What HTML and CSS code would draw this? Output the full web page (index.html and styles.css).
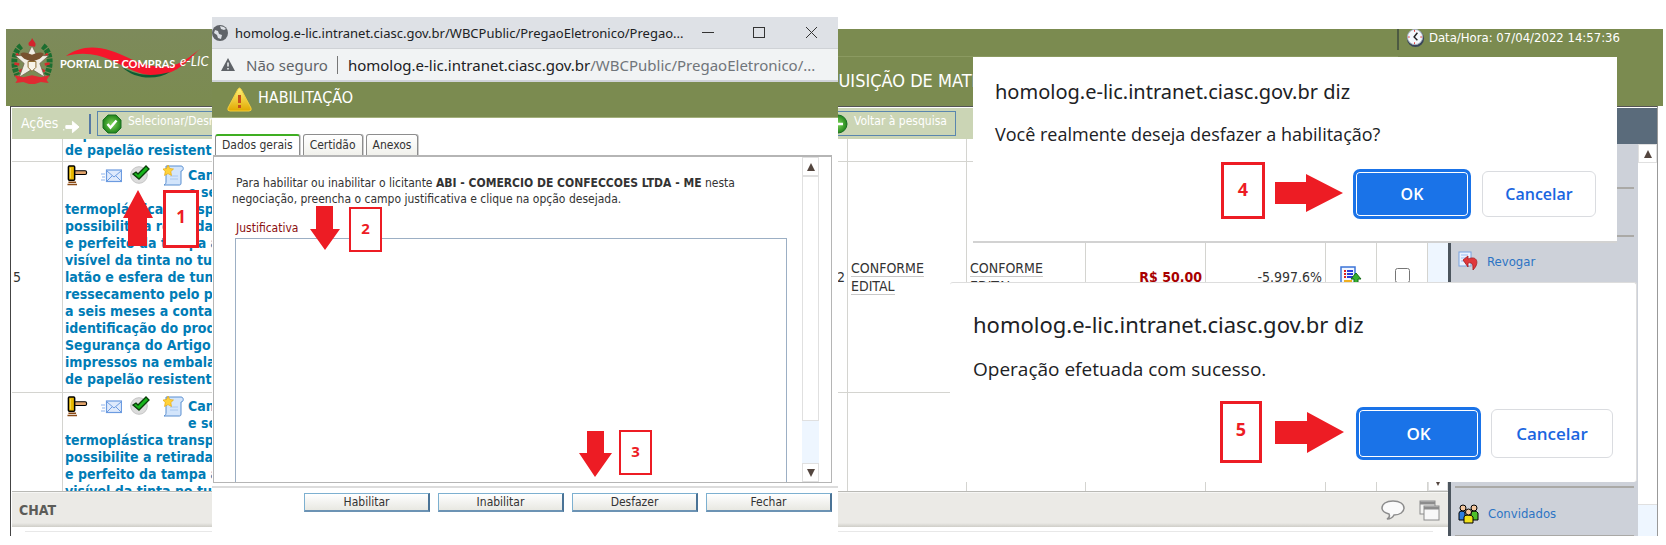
FILE: index.html
```html
<!DOCTYPE html>
<html lang="pt-BR">
<head>
<meta charset="utf-8">
<title>Portal de Compras e-LIC</title>
<link rel="stylesheet" href="styles.css">
</head>
<body>
<svg class="defs" aria-hidden="true">
  <defs>
    <linearGradient id="gold" x1="0" y1="0" x2="0" y2="1"><stop offset="0" stop-color="#fff27a"/><stop offset="1" stop-color="#e0a800"/></linearGradient>
    <radialGradient id="green"><stop offset="0" stop-color="#7fd65a"/><stop offset="1" stop-color="#23861c"/></radialGradient>
    <symbol id="gavel" viewBox="0 0 21 22"><rect x="7" y="6" width="13" height="4" rx="1.500" fill="#e2a46c" stroke="#000" stroke-width="1.200"/><rect x="1" y="1" width="6.500" height="15" rx="1" fill="#e8b800" stroke="#000" stroke-width="1.600"/><path d="M3 3v11" stroke="#ffe45a"/><path d="M1 18h8M0 20.500h10" stroke="#8a4a14" stroke-width="1.500"/></symbol>
    <symbol id="mail" viewBox="0 0 21 14"><path d="M0 5h4M1 8h3M0 11h4" stroke="#8db4ee" stroke-width="1.200"/><rect x="5.500" y="1" width="15" height="11.500" fill="#dfeafc" stroke="#6c9be0" stroke-width="1.200"/><path d="M6 2l7 6 7-6M6 12l5-5M20 12l-5-5" fill="none" stroke="#6c9be0"/></symbol>
    <symbol id="check" viewBox="0 0 20 19"><circle cx="9" cy="10" r="8.300" fill="#dcdcdc" stroke="#c4c4c4"/><path d="M3 9l3-2 2 2 8-8 3 3-10 10z" fill="#17b51c" stroke="#0a3d0a" stroke-width="1.300"/></symbol>
    <symbol id="scroll" viewBox="0 0 21 21"><path d="M3 1h15c3 0 3 5 0 5v12c0 2-1 2-2 2H1c2-1 2-2 2-4z" fill="#d3e5fb" stroke="#5a8fd0"/><path d="M7 11h8M7 14h8" stroke="#a9c8ee"/><path d="M5 0l1.800 3.500 3.700.5-2.700 2.600.7 3.900L5 8.600 1.500 10.500l.7-3.900L0 4l3.500-.5z" fill="#ffd23a" stroke="#e6a100" stroke-width=".6"/></symbol>
  </defs>
</svg>

<div class="app">
  <header class="top">
    <div class="brand">
      <svg class="crest" viewBox="0 0 42 48" role="img" aria-label="Brasão de Santa Catarina">
        <path d="M10 8C2 14 1 27 6 38M32 8c8 6 9 19 4 30" fill="none" stroke="#1c6e30" stroke-width="6" stroke-dasharray="4 1"/>
        <path d="M5 16l4 4M3 26l5 1M37 16l-4 4M39 26l-5 1M8 34l4-2M34 34l-4-2" stroke="#d42b2b" stroke-width="2.500"/>
        <path d="M21 8l5 10h12l-9 8 5 14-13-8-13 8 5-14-9-8h12z" fill="#f1eee4" stroke="#6e6650" stroke-width=".8"/>
        <path d="M9 16c4-3 8 0 12 1 4-1 8-4 12-1-2 5-6 6-9 7l-3 3-3-3c-3-1-7-2-9-7z" fill="#77522f"/>
        <path d="M17 24h8v6l-4 4-4-4z" fill="#f8f4e8" stroke="#8a6a30"/>
        <path d="M18 8c-2-5 2-3 3-8 2 4 5 5 3 9z" fill="#d3242c"/>
        <path d="M3 38l9 2 9-2 9 2 9-2-3 5 2 3-8-1-6 2h-6l-6-2-8 1 2-3z" fill="#e02a32"/>
      </svg>
      <div class="logo">
        <svg class="swoosh" viewBox="0 0 140 32" aria-hidden="true">
          <path d="M0 10C18-3 38-1 67 14c18 8 34 8 44 4 10-4 15-9 23-15-7 6-12 13-20 18-12 9-30 11-46 4C50 17 30 2 0 10z" fill="#f5152b"/>
          <path d="M56 21c16 9 30 10 48 5-14 9-36 7-48-5z" fill="#0c5c33"/>
        </svg>
        <span class="logo-name">PORTAL DE COMPRAS</span>
        <span class="logo-sub">e-LIC</span>
      </div>
    </div>
    <h1 class="title">AQUISIÇÃO DE MATERIAL</h1>
    <div class="clock">
      <svg viewBox="0 0 20 20" width="19" height="19" aria-hidden="true"><circle cx="10" cy="11" r="9" fill="#39445a"/><circle cx="9.500" cy="9.500" r="8" fill="#f4f8fc" stroke="#a8b4c4"/><path d="M12 5L8.500 9.500 12 13" fill="none" stroke="#222" stroke-width="1.500"/><path d="M9 2v2M9 15v2M2 9.500h2M15 9.500h2" stroke="#d33"/></svg>
      <span>Data/Hora: 07/04/2022 14:57:36</span>
    </div>
  </header>

  <div class="body">
    <main class="main">
      <div class="toolbar">
        <span class="actions-label">Ações</span>
        <svg class="arrow" viewBox="0 0 18 14" aria-hidden="true"><path d="M3 5.500h7V1l7 6-7 6V8.500H3zM0 10h1.500" fill="#fff" stroke="#fff" stroke-width="1"/></svg>
        <span class="bar"></span>
        <button class="tool select">
          <svg viewBox="0 0 20 20" width="20" height="20" aria-hidden="true"><path d="M6 1h8l5 5v8l-5 5H6l-5-5V6z" fill="url(#green)" stroke="#1b6e24"/><path d="M5.500 10l3 3.500 6-7" fill="none" stroke="#fff" stroke-width="2.500"/></svg>
          <span>Selecionar/Desmarcar todos</span>
        </button>
        <button class="tool back">
          <svg viewBox="0 0 20 20" width="20" height="20" aria-hidden="true"><circle cx="10" cy="10" r="9" fill="url(#green)" stroke="#1b6e24"/><path d="M5 10h10M9 6l-4 4 4 4" fill="none" stroke="#fff" stroke-width="2.500"/></svg>
          <span>Voltar à pesquisa</span>
        </button>
      </div>

      <div class="list">
        <div class="viewport">
          <table class="items">
            <colgroup><col class="c-num"><col><col class="c-doc"><col class="c-doc"><col class="c-money"><col class="c-money"><col class="c-icon"><col class="c-icon"></colgroup>
            <tbody>
              <tr class="r-first">
                <td></td><td class="desc">impressos na embalagem<br>de papelão resistente</td><td></td><td></td><td></td><td></td><td></td><td></td>
              </tr>
              <tr class="r-item">
                <td class="num">5</td>
                <td class="desc"><div class="wrap"><div class="text">
                  <span class="icons"><svg width="21" height="21"><use href="#gavel"/></svg><svg class="i-mail" width="21" height="14"><use href="#mail"/></svg><svg width="20" height="19"><use href="#check"/></svg><svg class="i-scroll" width="21" height="21"><use href="#scroll"/></svg></span>Caneta<br>e semi<br>termoplástica transparente<br>possibilite a retirada<br>e perfeito da tampa ao<br>visível da tinta no tubo<br>latão e esfera de tungs<br>ressecamento pelo prazo<br>a seis meses a contar<br>identificação do produto<br>Segurança do Artigo<br>impressos na embalagem<br>de papelão resistente</div><span class="qty">2</span></div></td>
                <td class="doc"><a href="#">CONFORME</a><br><a href="#">EDITAL</a></td>
                <td class="doc"><a href="#">CONFORME</a><br><a href="#">EDITAL</a></td>
                <td class="money">R$ 50,00</td>
                <td class="pct">-5.997,6%</td>
                <td class="center"><svg width="22" height="22" viewBox="0 0 22 22" aria-hidden="true"><rect x="1" y="1" width="14" height="18" fill="#f3f7ff" stroke="#3b74d8" stroke-width="1.500"/><path d="M4 5h2M4 8h2M4 11h2" stroke="#e02020" stroke-width="2"/><path d="M7 5h6M7 8h6M7 11h6" stroke="#2a3ad8" stroke-width="2"/><path d="M4 15h8" stroke="#f0b020" stroke-width="2"/><path d="M16 7l5 6h-3v6h-4v-6h-3z" fill="#36b030" stroke="#146a18"/></svg></td>
                <td class="center"><input type="checkbox" aria-label="Selecionar item 5"></td>
              </tr>
              <tr class="r-item">
                <td></td>
                <td class="desc"><div class="text">
                  <span class="icons"><svg width="21" height="21"><use href="#gavel"/></svg><svg class="i-mail" width="21" height="14"><use href="#mail"/></svg><svg width="20" height="19"><use href="#check"/></svg><svg class="i-scroll" width="21" height="21"><use href="#scroll"/></svg></span>Caneta<br>e semi<br>termoplástica transparente<br>possibilite a retirada<br>e perfeito da tampa ao<br>visível da tinta no tubo</div></td>
                <td></td><td></td><td></td><td></td><td></td><td></td>
              </tr>
            </tbody>
          </table>
        </div>
        <div class="scroll"><span class="sc-btn"><i class="down"></i></span></div>
      </div>

      <div class="chat">
        <h2>CHAT</h2>
        <svg width="25" height="20" viewBox="0 0 25 20" aria-hidden="true"><path d="M12 1c7 0 11 3 11 7s-4 7-10 7c-1 2-4 4-7 4 2-1 3-3 2-5-4-1-7-3-7-6 0-4 4-7 11-7z" fill="#fafafa" stroke="#8c8c8c" stroke-width="1.500"/></svg>
        <svg width="21" height="21" viewBox="0 0 21 21" aria-hidden="true"><rect x="1" y="1" width="15" height="13" fill="#f4f4f2" stroke="#8c8c8c"/><path d="M1 3h15" stroke="#8c8c8c" stroke-width="3"/><rect x="5" y="6" width="15" height="14" fill="#f8f8f8" stroke="#8c8c8c"/><path d="M5 8h15" stroke="#8c8c8c" stroke-width="3"/></svg>
      </div>
      <div class="chat-log"></div>
    </main>

    <aside class="side">
      <div class="side-head"></div>
      <div class="side-body">
        <nav class="menu">
          <a href="#" class="m-blank" aria-label="Menu"></a>
          <a href="#" class="m-gap" aria-label="Menu"></a>
          <a href="#" class="m-item"><svg width="20" height="20" viewBox="0 0 20 20" aria-hidden="true"><rect x="1" y="1" width="12" height="14" fill="#eaf2ff" stroke="#7aa3e0"/><path d="M3 4h7M3 7h5M3 10h4" stroke="#9cbcf0"/><path d="M5 9l5-4v3c9-4 12 4 5 11 0-5 0-8-5-7v4z" fill="#e0383c" stroke="#a51a20" stroke-width=".8"/></svg><span>Revogar</span></a>
          <a href="#" class="m-hidden" aria-label="Menu"></a>
          <a href="#" class="m-item m-last"><svg width="21" height="20" viewBox="0 0 21 20" aria-hidden="true"><g stroke="#000" stroke-width="1"><path d="M1 16V9q0-2 3-2t3 2v7z" fill="#2f7fe0"/><circle cx="5" cy="4" r="3" fill="#f4c8a0"/><path d="M13 16V9q0-2 3-2t4 2v7z" fill="#4fc02a"/><circle cx="16" cy="4" r="3" fill="#f4c8a0"/><path d="M6 19v-6q0-2 4-2t5 2v6z" fill="#f2e21c"/><circle cx="10.500" cy="8" r="3" fill="#f4c8a0"/></g></svg><span>Convidados</span></a>
        </nav>
        <div class="scroll side-scroll"><span class="sc-btn"><i class="up"></i></span><span class="thumb"></span></div>
      </div>
    </aside>
  </div>
</div>

<section class="popup">
  <div class="p-title">
    <svg width="16" height="16" viewBox="0 0 16 16" aria-hidden="true"><circle cx="8" cy="8" r="8" fill="#5f6368"/><path d="M3 5l3 1 1 3 3 1-1 4-3-1-1-3-3-2zM8 1l1 3 3 1 2-1-2-2z" fill="#dee1e6"/></svg>
    <span class="p-name">homolog.e-lic.intranet.ciasc.gov.br/WBCPublic/PregaoEletronico/Pregao...</span>
    <svg width="116" height="14" viewBox="0 0 116 14" fill="none" stroke="#333" aria-hidden="true"><path d="M0 6.500h12M104 1l11 11M115 1l-11 11"/><rect x="51.500" y="1.500" width="11" height="10"/></svg>
  </div>
  <div class="p-addr">
    <svg width="14" height="13" viewBox="0 0 14 13" aria-hidden="true"><path d="M7 0l7 13H0z" fill="#5f6368"/><path d="M7 4.500v4M7 10v1.500" stroke="#f1f3f4" stroke-width="1.500"/></svg>
    <span class="unsafe">Não seguro</span><span class="pipe"></span>
    <span class="url">homolog.e-lic.intranet.ciasc.gov.br<span>/WBCPublic/PregaoEletronico/...</span></span>
  </div>
  <div class="p-head">
    <svg width="25" height="25" viewBox="0 0 25 25" aria-hidden="true"><path d="M12.500 1q1 0 2 2l9.500 18q1 3-2 3H3q-3 0-2-3L10.500 3q1-2 2-2z" fill="url(#gold)" stroke="#f3cf3c"/><path d="M12.500 8v8M12.500 18v3" stroke="#c8501a" stroke-width="3"/></svg>
    <h2>HABILITAÇÃO</h2>
  </div>
  <div class="tabs" role="tablist">
    <button class="tab active" role="tab">Dados gerais</button>
    <button class="tab" role="tab">Certidão</button>
    <button class="tab" role="tab">Anexos</button>
  </div>
  <div class="panel">
    <div class="panel-main">
      <p>Para habilitar ou inabilitar o licitante <b>ABI - COMERCIO DE CONFECCOES LTDA - ME</b> nesta negociação, preencha o campo justificativa e clique na opção desejada.</p>
      <label for="just">Justificativa</label>
      <textarea id="just"></textarea>
    </div>
    <div class="scroll p-scroll"><span class="sc-btn"><i class="up"></i></span><span class="thumb"></span><span class="track"></span><span class="sc-btn"><i class="down"></i></span></div>
  </div>
  <div class="p-actions">
    <button>Habilitar</button><button>Inabilitar</button><button>Desfazer</button><button>Fechar</button>
  </div>
</section>

<section class="dialog d-confirm" role="dialog">
  <h3>homolog.e-lic.intranet.ciasc.gov.br diz</h3>
  <p>Você realmente deseja desfazer a habilitação?</p>
  <div class="d-actions"><button class="ok">OK</button><button class="cancel">Cancelar</button></div>
</section>
<section class="dialog d-done" role="dialog">
  <h3>homolog.e-lic.intranet.ciasc.gov.br diz</h3>
  <p>Operação efetuada com sucesso.</p>
  <div class="d-actions"><button class="ok">OK</button><button class="cancel">Cancelar</button></div>
</section>

<svg class="ptr a1" viewBox="0 0 30 56" aria-hidden="true"><path d="M15 0l15 28h-6v28H5V28H0z"/></svg><span class="step s1">1</span>
<svg class="ptr a2" viewBox="0 0 30 44" aria-hidden="true"><path d="M6 0h17v23h7L15 44 0 23h6z"/></svg><span class="step s2">2</span>
<svg class="ptr a3" viewBox="0 0 33 46" aria-hidden="true"><path d="M8 0h17v22h8L16 46 0 22h8z"/></svg><span class="step s3">3</span>
<svg class="ptr a4" viewBox="0 0 68 38" aria-hidden="true"><path d="M0 8h31V0l37 19-37 19v-8H0z"/></svg><span class="step s4">4</span>
<svg class="ptr a5" viewBox="0 0 69 41" aria-hidden="true"><path d="M0 9h32V0l37 20-37 21v-9H0z"/></svg><span class="step s5">5</span>
</body>
</html>
```
FILE: styles.css
```css
* { box-sizing: border-box; }
html, body { height: 100%; }
body {
  margin: 0;
  padding: 29px 3px 9px 6px;
  position: relative;
  overflow: hidden;
  background: #fff;
  color: #333;
  font: 14px/17px "DejaVu Sans Condensed", "DejaVu Sans", Tahoma, sans-serif;
}
h1, h2, h3, p { margin: 0; font-weight: normal; }
button { font: inherit; margin: 0; padding: 0; }
a { text-decoration: none; color: inherit; }
svg { flex: none; }
.defs { position: absolute; width: 0; height: 0; }

.app { height: 100%; display: flex; flex-direction: column; }

.top {
  height: 77px;
  flex: none;
  display: flex;
  align-items: flex-start;
  background: linear-gradient(#8b9a61, #8b9a61) 832px 27px / 560px 1px no-repeat, #7b8b50;
}
.brand { width: 206px; flex: none; display: flex; align-items: flex-start; padding: 9px 0 0 5px; height: 77px; background: linear-gradient(#7d8a5b, #7b8b50); }
.crest { width: 42px; height: 47px; }
.logo { position: relative; display: flex; align-items: center; padding: 16px 0 0 7px; white-space: nowrap; color: #fff; }
.swoosh { position: absolute; left: 13px; top: 8px; width: 140px; height: 32px; }
.logo-name { position: relative; width: 120px; font: bold 11px/20px Lato, sans-serif; }
.logo-sub { position: relative; font: italic 13px/14px Lato, sans-serif; padding-bottom: 6px; }
.title { padding: 40px 0 0 603px; flex: 1; font-size: 18px; line-height: 24px; color: #fff; white-space: nowrap; }
.clock {
  display: flex;
  align-items: center;
  gap: 4px;
  height: 21px;
  margin-right: 43px;
  padding: 0 0 4px 7px;
  border-left: 2px solid #4d5a42;
  color: #fff;
  font-size: 13px;
  white-space: nowrap;
}

.body { flex: 1; min-height: 0; display: flex; margin: 0 5px 0 4px; border-left: 1px solid #444; border-right: 1px solid #999; border-top: 1px solid #555; padding: 1px 0 0 1px; }
.main { flex: 1; min-width: 0; display: flex; flex-direction: column; }
.toolbar { height: 31px; flex: none; display: flex; align-items: center; background: #cbd5b5; color: #fff; }
.actions-label { margin-left: 9px; width: 42px; }
.arrow { width: 17px; height: 14px; margin-top: 6px; }
.bar { width: 2px; height: 20px; margin: 0 6px 0 9px; background: #5679a4; }
.tool { display: flex; align-items: center; gap: 6px; height: 25px; padding: 0 8px 0 4px; border: 1px solid #5a86ae; background: transparent; color: #fff; font-size: 12px; white-space: nowrap; }
.tool span { padding-bottom: 4px; }
.select { width: 200px; }
.back { margin-left: 526px; }

.list { flex: 1; min-height: 0; display: flex; border-bottom: 1px solid #b9b9b5; }
.viewport { flex: 1; min-width: 0; overflow: hidden; }
.items { width: 100%; margin-top: -13px; table-layout: fixed; border-collapse: separate; border-spacing: 0; }
.c-num { width: 51px; }
.c-doc { width: 119px; }
.c-money { width: 120px; }
.c-icon { width: 51px; }
td { padding: 0 2px; border: solid #d4d4d0; border-width: 0 1px 1px 0; vertical-align: middle; }
td:first-child { padding-left: 1px; }
.r-first { height: 36px; }
.r-first .desc { vertical-align: top; line-height: 16px; }
.r-item { height: 231px; }
.r-item td.desc { vertical-align: top; padding-top: 5px; }
.desc { color: #007cb6; font-weight: bold; white-space: nowrap; }
.wrap { display: flex; justify-content: space-between; align-items: center; }
.qty { color: #333; font-weight: normal; }
.icons { float: left; width: 123px; height: 34px; display: flex; align-items: flex-start; padding-left: 2px; }
.icons svg { margin-top: -2px; }
.icons .i-mail { margin: 2px 8px 0 13px; }
.icons .i-scroll { margin-left: 13px; }
.doc { line-height: 18px; padding-left: 3px; }
.doc a { border-bottom: 1px solid #c8c8c8; }
.money { text-align: right; color: #a80000; font-weight: bold; padding-right: 3px; }
.pct { text-align: right; padding-right: 3px; }
.center { text-align: center; }
.center svg { display: block; margin: 0 auto; }
.center input { width: 15px; height: 15px; margin: 0; }

.scroll { width: 20px; flex: none; display: flex; flex-direction: column; background: #eef6ff; }
.list .scroll { justify-content: flex-end; }
.sc-btn { height: 19px; flex: none; display: flex; align-items: center; justify-content: center; background: #fff; border: 1px solid #e0e0e0; }
.thumb { flex: 1; background: #fff; border: 1px solid #e0e0e0; }
.up, .down { border: solid transparent; border-width: 0 4px; }
.up { border-bottom: 8px solid #54463f; }
.down { border-top: 8px solid #54463f; }

.chat { height: 35px; flex: none; display: flex; align-items: center; gap: 13px; padding: 0 8px 0 7px; background: linear-gradient(#ebeae6 88%, #cfcec8); border-top: 1px solid #f6f6f4; }
.chat h2 { flex: 1; font-weight: bold; font-size: 14px; color: #5c5c58; }
.chat-log { height: 9px; flex: none; margin: 0 15px 0 13px; background: linear-gradient(#e8e8e8, #e8e8e8) 0 4px / 100% 1px no-repeat; }

.side { width: 209px; flex: none; display: flex; flex-direction: column; border-left: 3px solid #4c555e; }
.side-head { height: 36px; flex: none; background: #5a6b7b; }
.side-body { flex: 1; min-height: 0; display: flex; }
.menu { flex: 1; display: flex; flex-direction: column; padding: 0 4px; background: #cdd1d9; }
.menu a { display: flex; align-items: center; gap: 9px; padding-left: 3px; border-bottom: 2px solid #aaa9a6; color: #2c74c4; font-size: 13px; }
.m-blank { height: 45px; }
.m-gap { height: 48px; }
.m-item { height: 50px; }
.menu .m-hidden { flex: 1; }
.menu .m-last { border-bottom-width: 1px; height: 48px; padding-top: 4px; }
.side-scroll { width: 19px; }
.side-scroll .thumb { border-width: 0 0 1px; margin-bottom: 31px; }

.popup { position: absolute; left: 212px; top: 17px; width: 626px; height: 520px; display: flex; flex-direction: column; background: #fff; }
.p-title { height: 32px; flex: none; display: flex; align-items: center; padding: 0 20px 0 0; gap: 7px; background: #dee1e6; border-bottom: 1px solid #cfd2d6; font: 13px/18px "Noto Sans", sans-serif; color: #202124; }
.p-name { flex: 1; white-space: nowrap; }
.p-addr { height: 33px; flex: none; display: flex; align-items: center; padding-left: 9px; background: #f1f3f4; border-bottom: 2px solid #d0d3d8; font: 15px/20px "Noto Sans", sans-serif; color: #202124; white-space: nowrap; }
.unsafe { margin-left: 11px; color: #5f6368; }
.pipe { width: 1px; height: 18px; margin: 0 10px 0 9px; background: #777; }
.url span { color: #70757a; }
.p-head { height: 36px; flex: none; display: flex; align-items: center; gap: 6px; padding-left: 15px; background: #7b8b50; border-bottom: 1px solid #a4b07c; color: #fff; }
.p-head h2 { font-size: 16px; line-height: 20px; padding-bottom: 4px; }
.tabs { display: flex; gap: 3px; padding: 16px 0 0 3px; }
.tab { height: 21px; padding: 0 6px; border: 1px solid #8d8d8d; border-bottom: 0; border-radius: 3px 3px 0 0; background: linear-gradient(#fff, #f1f1ec); font-size: 12px; color: #333; box-shadow: 1px 0 0 #ccc; }
.tab.active { border-top: 2px solid #3fae22; background: #fff; }
.panel { flex: 1; min-height: 0; display: flex; margin: 0 6px 0 1px; border: 1px solid #b5b5b5; border-top-width: 2px; }
.panel-main { flex: 1; display: flex; flex-direction: column; padding: 18px 15px 0 18px; font-size: 12px; line-height: 16px; }
.panel-main p { text-indent: 4px; }
.panel-main label { margin: 13px 0 2px 4px; color: #8b1010; }
.panel-main textarea { flex: 1; margin-left: 3px; padding: 4px; resize: none; border: 1px solid #9cafc4; border-bottom: 0; outline: 0; background: #fff; font: inherit; }
.p-scroll { width: 17px; margin-right: 12px; }
.p-scroll .track { height: 42px; }
.p-actions { height: 51px; flex: none; display: flex; justify-content: flex-end; gap: 8px; margin-top: 3px; padding: 5px 6px 0 0; border-top: 2px solid #dcdcdc; align-items: flex-start; }
.p-actions button { width: 126px; height: 19px; border: 1px solid #7db0d0; border-right: 2px solid #4a7396; border-bottom: 2px solid #6c93b4; background: linear-gradient(#fff, #e8e8e2); font-size: 12px; line-height: 16px; color: #333; }

.dialog { position: absolute; background: #fff; font-family: "Open Sans", "Segoe UI", sans-serif; color: #202124; white-space: nowrap; display: flex; flex-direction: column; }
.dialog h3 { font-family: "Noto Sans", sans-serif; }
.d-actions { display: flex; justify-content: flex-end; align-items: center; margin-top: auto; }
.dialog button { background: #fff; border: 1px solid #dadce0; border-radius: 6px; color: #1a66e0; font-weight: 600; }
.dialog .ok { background: #1a73e8; color: #fff; border: 3px solid #1a73e8; border-radius: 7px; box-shadow: inset 0 0 0 1px #fff; }
.d-confirm { left: 973px; top: 57px; width: 644px; height: 186px; padding: 21px 21px 22px 22px; border-bottom: 2px solid #d2d2d2; }
.d-confirm h3 { font-size: 20px; line-height: 28px; }
.d-confirm p { font-size: 18px; line-height: 24px; margin-top: 16px; }
.d-confirm .d-actions { gap: 11px; }
.d-confirm button { width: 114px; height: 46px; font-size: 16px; }
.d-confirm .ok { width: 118px; height: 50px; }
.d-done { left: 950px; top: 282px; width: 687px; height: 200px; padding: 26px 23px 22px 23px; border-top: 1px solid #ddd; border-right: 1px solid #ddd; border-radius: 3px; }
.d-done h3 { font-size: 22px; line-height: 30px; }
.d-done p { font-size: 19px; line-height: 26px; margin-top: 17px; }
.d-done .d-actions { gap: 10px; }
.d-done button { width: 122px; height: 49px; font-size: 17px; }
.d-done .ok { width: 125px; height: 53px; }

.ptr { position: absolute; fill: #ed1c24; }
.step { position: absolute; display: flex; align-items: center; justify-content: center; background: #fff; border: 3px solid #ed1c24; color: #ed1c24; font: bold 15px/18px "Open Sans", sans-serif; padding-bottom: 4px; }
.a1 { left: 123px; top: 190px; width: 30px; height: 56px; }
.s1 { left: 163px; top: 190px; width: 36px; height: 58px; font-size: 17px; }
.a2 { left: 310px; top: 206px; width: 30px; height: 44px; }
.s2 { left: 349px; top: 207px; width: 33px; height: 45px; border-width: 2px; }
.a3 { left: 579px; top: 431px; width: 33px; height: 46px; }
.s3 { left: 619px; top: 430px; width: 33px; height: 45px; border-width: 2px; }
.a4 { left: 1275px; top: 174px; width: 68px; height: 38px; }
.s4 { left: 1221px; top: 162px; width: 44px; height: 57px; font-size: 18px; }
.a5 { left: 1275px; top: 412px; width: 69px; height: 41px; }
.s5 { left: 1220px; top: 401px; width: 42px; height: 62px; font-size: 18px; padding-bottom: 6px; }
```
